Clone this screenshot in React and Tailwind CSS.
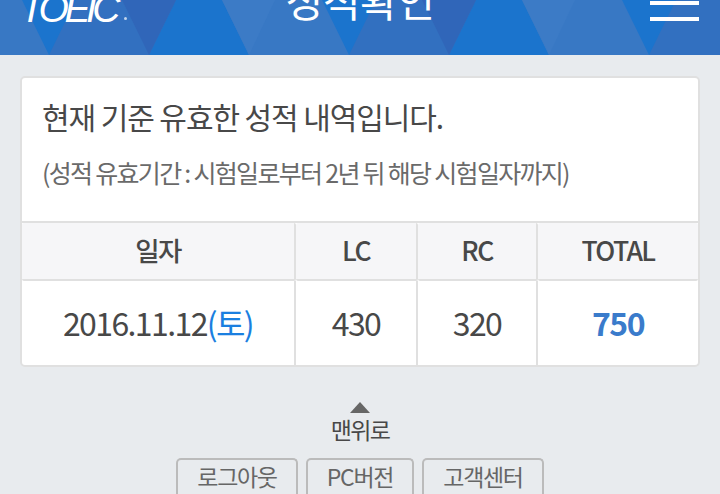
const font = { fontFamily: '"Noto Sans CJK KR", "Noto Sans", sans-serif' };

function HeaderBg() {
  const groups = [-300, 0, 300, 600];
  return (
    <svg className="absolute inset-0" width="720" height="55" viewBox="0 0 720 55">
      <rect width="720" height="55" fill="#1b74cd" />
      {groups.map((d) => (
        <g key={d} transform={`translate(${d} 0)`}>
          <polygon points="49,55 149,55 176,0 76,0" fill="#3270c0" />
          <polygon points="149,55 176,0 122,0" fill="#3066b9" />
          <polygon points="249,55 349,55 322,0 222,0" fill="#3878c4" />
          <polygon points="222,0 249,55 275,0" fill="#3c7bc6" />
        </g>
      ))}
    </svg>
  );
}

function Th({ className, children }) {
  return (
    <div className={`flex items-center justify-center pb-[2px] bg-[#f6f6f8] text-[26.5px] font-medium tracking-[-1.6px] text-[#484848] rounded-[2px] border-b-2 border-[#e0e0e0] ${className}`}>
      {children}
    </div>
  );
}

function Td({ className, children }) {
  return (
    <div className={`flex items-center justify-center pb-[3px] text-[32px] tracking-[-1.6px] ${className}`}>
      {children}
    </div>
  );
}

function FootButton({ className, children }) {
  return (
    <div className={`h-[36px] flex items-start justify-center rounded-t-[5px] border-2 border-b-0 border-[#bbbbbb] text-[23px] leading-[32px] tracking-[-1.3px] text-[#666] ${className}`}>
      {children}
    </div>
  );
}

export default function App() {
  return (
    <div className="w-[720px] h-[494px] overflow-hidden bg-[#e8ebee]" style={font}>
      <header className="relative h-[55px] overflow-hidden">
        <HeaderBg />
        <div className="relative flex items-start justify-between h-full">
          <div className="ml-[20px] -mt-[11px] flex items-end text-[39px] leading-[40px] italic tracking-[-4.5px] text-white" style={{ fontFamily: '"Liberation Sans", sans-serif' }}>
            TOEIC
            <span className="ml-[8px] mb-[9px] w-[3px] h-[3px] rounded-full bg-white/70" />
          </div>
          <div className="absolute left-0 right-0 -top-[28px] text-center text-[41px] leading-[54px] tracking-[-0.5px] text-white">성적확인</div>
          <div className="mr-[21px] flex flex-col gap-[12px] pt-[1px]">
            <div className="w-[49px] h-[4px] bg-white" />
            <div className="w-[49px] h-[4px] bg-white" />
          </div>
        </div>
      </header>

      <main className="px-[20px] pt-[21px]">
        <section className="h-[291px] flex flex-col rounded-[5px] border-2 border-[#e0e0e0] bg-white">
          <div className="h-[143px] pl-[20px] pt-[18px]">
            <p className="text-[30px] leading-[40px] tracking-[-1.08px] text-[#484848]">현재 기준 유효한 성적 내역입니다.</p>
            <p className="mt-[19px] text-[25px] leading-[34px] tracking-[-1.7px] text-[#6a6a6a]">(성적 유효기간 : 시험일로부터 2년 뒤 해당 시험일자까지)</p>
          </div>
          <div className="grid grid-cols-[274px_122px_120px_1fr] grid-rows-[58px_84px] border-t-2 border-[#e0e0e0]">
            <Th className="border-r-2">일자</Th>
            <Th className="border-r-2">LC</Th>
            <Th className="border-r-2">RC</Th>
            <Th>TOTAL</Th>
            <Td className="border-r-2 border-[#e0e0e0] text-[#484848]">2016.11.12<span className="text-[#1b7fe0]">(토)</span></Td>
            <Td className="border-r-2 border-[#e0e0e0] text-[#484848]">430</Td>
            <Td className="border-r-2 border-[#e0e0e0] text-[#484848]">320</Td>
            <Td className="font-bold text-[#3a7bcb]">750</Td>
          </div>
        </section>
      </main>

      <div className="flex flex-col items-center pt-[35px]">
        <div className="w-0 h-0 border-x-[10px] border-b-[11px] border-x-transparent border-b-[#666]" />
        <div className="mt-[1px] text-[23px] leading-[30px] tracking-[-1.6px] text-[#484848]">맨위로</div>
      </div>

      <nav className="mt-[14px] flex justify-center gap-[8px]">
        <FootButton className="w-[122px]">로그아웃</FootButton>
        <FootButton className="w-[108px]">PC버전</FootButton>
        <FootButton className="w-[122px]">고객센터</FootButton>
      </nav>
    </div>
  );
}
